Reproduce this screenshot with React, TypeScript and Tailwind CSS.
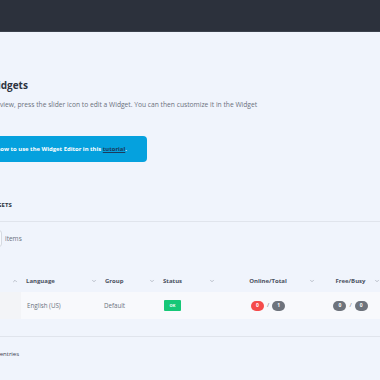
import { ChevronDown, ChevronUp } from 'lucide-react';

function HeadCell({ label, sort = 'down', center = false }: { label?: string; sort?: 'up' | 'down'; center?: boolean }) {
    return (
        <div className={`relative flex h-full items-center ${center ? 'justify-center' : 'pl-[5px]'}`}>
            <span className="text-[6px] font-bold text-[#4a5060]">{label}</span>
            <span className="absolute right-[3px] top-1/2 -translate-y-1/2 text-[#9aa0ab]">
                {sort === 'up' ? (
                    <ChevronUp className="h-[6px] w-[6px]" strokeWidth={2.5} />
                ) : (
                    <ChevronDown className="h-[6px] w-[6px]" strokeWidth={2.5} />
                )}
            </span>
        </div>
    );
}

function Pill({ value, red = false }: { value: string; red?: boolean }) {
    return (
        <span
            className={`flex h-[10px] w-[13px] items-center justify-center rounded-full text-[5px] font-bold leading-none text-white ${
                red ? 'bg-[#f54b4b]' : 'bg-[#6e737c]'
            }`}
        >
            {value}
        </span>
    );
}

function Counts({ a, b, red = false }: { a: string; b: string; red?: boolean }) {
    return (
        <div className="flex items-center justify-center gap-[3px]">
            <Pill value={a} red={red} />
            <span className="text-[6px] text-[#6b7280]">/</span>
            <Pill value={b} />
        </div>
    );
}

const cols = 'grid grid-cols-[81px_79px_58px_60px_100px_65px]';

export default function App() {
    return (
        <div className="h-[380px] w-[380px] overflow-hidden bg-[#f0f4fc] font-['Open_Sans',sans-serif]">
            {/* Top bar */}
            <div className="h-[32px] border-b border-[#3b414d] bg-[#2c313c]" />

            {/* Page intro */}
            <div className="-ml-[12px] flex flex-col">
                <h1 className="mt-[46px] whitespace-nowrap text-[10px] font-bold leading-[14px] text-[#2d3340]">
                    Widgets
                </h1>
                <p className="-ml-[3px] mt-[8px] whitespace-nowrap text-[6.7px] leading-[10px] text-[#6b717d]">
                    Overview, press the slider icon to edit a Widget. You can then customize it in the Widget
                </p>
                <div className="-ml-[20px] mt-[26px] flex h-[26px] w-[179px] items-center rounded-[4px] bg-[#05a1de] pl-[10px]">
                    <span className="whitespace-nowrap text-[5.9px] font-bold text-white">
                        Learn how to use the Widget Editor in this{' '}
                        <span className="text-[#1c3a5c] underline">tutorial</span>.
                    </span>
                </div>
                <div className="-ml-[3px] mt-[38px] whitespace-nowrap text-[6px] font-bold leading-[10px] text-[#2d3340]">
                    WIDGETS
                </div>
            </div>

            {/* Table card */}
            <div className="mt-[11px] border-b border-t border-[#e0e4ec]">
                <div className="-ml-[28px] mt-[8px] flex h-[17px] items-center gap-[3px]">
                    <div className="h-[17px] w-[30px] rounded-[3px] border border-[#d6dae2] bg-[#f7f9fd]" />
                    <span className="text-[6.5px] text-[#6b717d]">items</span>
                </div>

                <div className="-ml-[60px] mt-[23px]">
                    <div className={`${cols} h-[22px]`}>
                        <HeadCell label="Name" sort="up" />
                        <HeadCell label="Language" />
                        <HeadCell label="Group" />
                        <HeadCell label="Status" />
                        <HeadCell label="Online/Total" center />
                        <HeadCell label="Free/Busy" center />
                    </div>
                    <div className={`${cols} h-[27px] bg-[#f8f9fc] text-[6.2px] text-[#6b717d]`}>
                        <div className="bg-[#f3f4f7]" />
                        <div className="flex items-center pl-[6px]">English (US)</div>
                        <div className="flex items-center pl-[4px]">Default</div>
                        <div className="flex items-center pl-[6px]">
                            <span className="flex h-[11px] w-[17px] items-center justify-center rounded-[1px] bg-[#16c777] text-[4px] font-bold text-white">
                                OK
                            </span>
                        </div>
                        <div className="flex items-center justify-center">
                            <Counts a="0" b="1" red />
                        </div>
                        <div className="flex items-center justify-center">
                            <Counts a="0" b="0" />
                        </div>
                    </div>
                </div>
                <div className="h-[17px]" />
            </div>

            <div className="-ml-[55px] mt-[12px] whitespace-nowrap text-[6px] leading-[10px] text-[#3d4350]">
                Showing 1 to 1 of 1 entries
            </div>
        </div>
    );
}
